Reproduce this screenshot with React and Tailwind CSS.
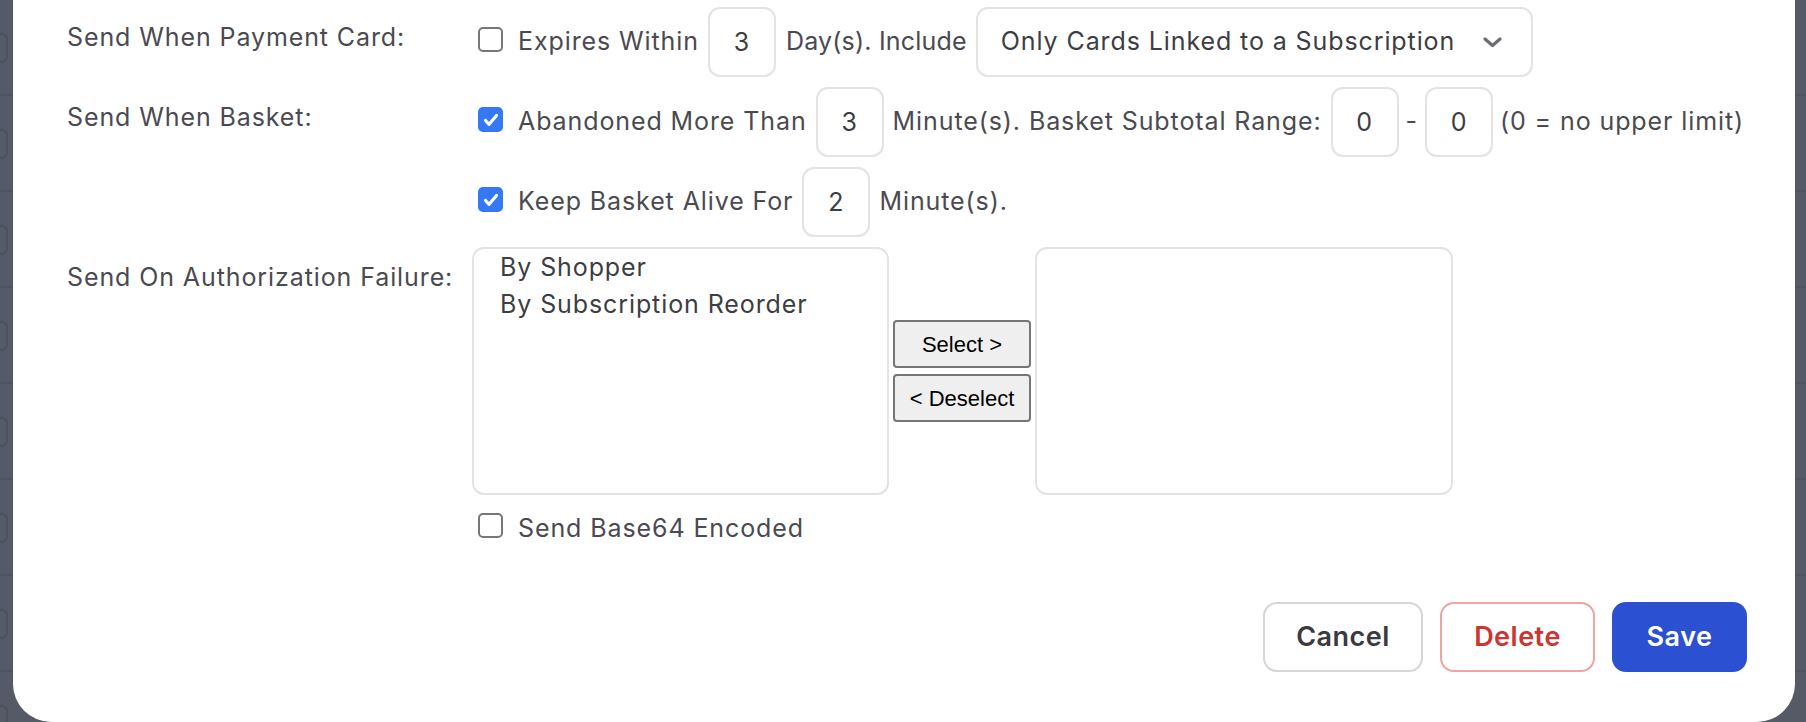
import React from 'react';

const font = { fontFamily: 'Inter, "Noto Sans", sans-serif' };

const Checkbox = ({ checked }) =>
  checked ? (
    <span className="flex h-[25px] w-[25px] shrink-0 items-center justify-center rounded-[5px] bg-[#3478f6] mb-[5px]">
      <svg width="18" height="18" viewBox="0 0 18 18" fill="none">
        <path d="M3.5 9.5l3.6 3.8L14.5 4.5" stroke="white" strokeWidth="3.2" strokeLinecap="round" strokeLinejoin="round" />
      </svg>
    </span>
  ) : (
    <span className="h-[25px] w-[25px] shrink-0 rounded-[5px] border-2 border-[#777] bg-white mb-[5px]" />
  );

const NumBox = ({ value }) => (
  <input
    readOnly
    value={value}
    className="h-[70px] w-[68px] shrink-0 rounded-[12px] border-2 border-[#e3e3e3] bg-white text-center text-[25px] text-[#3d3d44] outline-none font-[Inter]"
  />
);

const Label = ({ children }) => (
  <div className="w-[411px] shrink-0 pt-[12px] leading-[36px] text-[25px] tracking-[0.9px] text-[#4a4a52]">{children}</div>
);

const BgRow = () => (
  <div className="relative h-[96px] border-b-2 border-[#4f535e]">
    <div className="absolute left-[-30px] top-[33px] h-[30px] w-[38px] rounded-[6px] border-2 border-[#4d515c]" />
  </div>
);

export default function App() {
  return (
    <div className="relative h-[722px] w-full overflow-hidden bg-[#565a66]" style={font}>
      <div className="flex flex-col">
        <BgRow />
        <BgRow />
        <BgRow />
        <BgRow />
        <BgRow />
        <BgRow />
        <BgRow />
        <BgRow />
      </div>

      <div className="absolute left-[13px] right-[11px] top-0 bottom-0 rounded-b-[38px] bg-white pl-[54px] pr-[48px] pt-[7px]">
        <div className="flex flex-col gap-[10px]">
          {/* payment card */}
          <div className="flex">
            <Label>Send When Payment Card:</Label>
            <div className="flex items-center gap-[9px] text-[25px] tracking-[0.9px] text-[#4a4a52]">
              <Checkbox />
              <span className="ml-[6px]">Expires Within</span>
              <NumBox value="3" />
              <span className="ml-[1px] tracking-[0.2px]">Day(s). Include</span>
              <div className="flex h-[70px] w-[557px] items-center justify-between rounded-[12px] border-2 border-[#e3e3e3] pl-[23px] pr-[29px] text-[#3d3d44]">
                <span>Only Cards Linked to a Subscription</span>
                <svg width="19" height="11" viewBox="0 0 19 11" fill="none">
                  <path d="M2 2l7.5 6.5L17 2" stroke="#6b6e76" strokeWidth="3.2" strokeLinecap="round" strokeLinejoin="round" />
                </svg>
              </div>
            </div>
          </div>

          {/* basket */}
          <div className="flex">
            <Label>Send When Basket:</Label>
            <div className="flex flex-col gap-[10px]">
              <div className="flex items-center gap-[9px] text-[25px] tracking-[0.9px] text-[#4a4a52]">
                <Checkbox checked />
                <span className="ml-[6px]">Abandoned More Than</span>
                <NumBox value="3" />
                <span>Minute(s). Basket Subtotal Range:</span>
                <NumBox value="0" />
                <span className="-mx-[2px]">-</span>
                <NumBox value="0" />
                <span className="-ml-[2px]">(0 = no upper limit)</span>
              </div>
              <div className="flex items-center gap-[9px] text-[25px] tracking-[0.9px] text-[#4a4a52]">
                <Checkbox checked />
                <span className="ml-[6px]">Keep Basket Alive For</span>
                <NumBox value="2" />
                <span>Minute(s).</span>
              </div>
            </div>
          </div>

          {/* authorization failure */}
          <div className="flex">
            <div className="w-[405px] shrink-0 pt-[12px] leading-[36px] text-[25px] tracking-[0.9px] text-[#4a4a52]">
              Send On Authorization Failure:
            </div>
            <div className="flex flex-col">
              <div className="flex items-center gap-[4px]">
                <div className="h-[248px] w-[417px] rounded-[12px] border-2 border-[#e3e3e3] pl-[26px] text-[25px] leading-[37px] tracking-[0.9px] text-[#3d3d44]">
                  <div>By Shopper</div>
                  <div>By Subscription Reorder</div>
                </div>
                <div className="flex flex-col gap-[6px]" style={{ fontFamily: '"Liberation Sans", Arial, sans-serif' }}>
                  <button className="h-[48px] w-[138px] rounded-[4px] border-2 border-[#767676] bg-[#efefef] text-[22px] text-black">
                    Select &gt;
                  </button>
                  <button className="h-[48px] w-[138px] rounded-[4px] border-2 border-[#767676] bg-[#efefef] text-[22px] text-black">
                    &lt; Deselect
                  </button>
                </div>
                <div className="h-[248px] w-[418px] rounded-[12px] border-2 border-[#e3e3e3]" />
              </div>
              <div className="mt-[15px] flex items-center gap-[15px] pl-[6px] text-[25px] leading-[36px] tracking-[0.9px] text-[#4a4a52]">
                <Checkbox />
                <span>Send Base64 Encoded</span>
              </div>
            </div>
          </div>
        </div>

        {/* footer */}
        <div className="mt-[56px] flex justify-end gap-[17px] text-[27px] font-semibold tracking-[0.5px]">
          <button className="h-[70px] w-[160px] rounded-[14px] border-2 border-[#d6d6da] bg-white text-[#3a3a40]">
            Cancel
          </button>
          <button className="h-[70px] w-[155px] rounded-[14px] border-2 border-[#f0a3a0] bg-white text-[#cc3530]">
            Delete
          </button>
          <button className="h-[70px] w-[135px] rounded-[14px] bg-[#2b50d2] text-white">Save</button>
        </div>
      </div>
    </div>
  );
}
